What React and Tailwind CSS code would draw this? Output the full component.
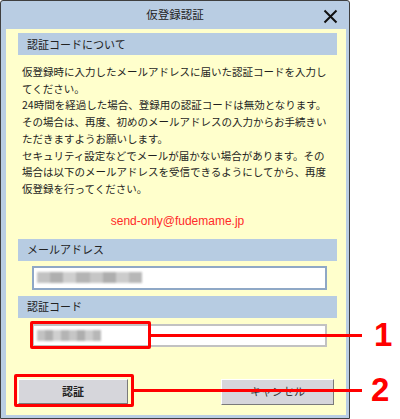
import React from 'react'

const jp = { fontFamily: '"Noto Sans CJK JP", "Noto Sans", sans-serif' }

const Blur = ({ w }) => (
    <div className='flex h-[11px] blur-[1.2px] opacity-80' style={{ width: w }}>
        <div className='flex-1 bg-[#b4b4b4]' />
        <div className='flex-1 bg-[#9c9c9c]' />
        <div className='flex-1 bg-[#c4c4c4]' />
        <div className='flex-1 bg-[#a2a2a2]' />
        <div className='flex-1 bg-[#b8b8b8]' />
        <div className='flex-1 bg-[#9a9a9a]' />
        <div className='flex-1 bg-[#c0c0c0]' />
        <div className='flex-1 bg-[#a6a6a6]' />
    </div>
)

const SectionHead = ({ children, className = '' }) => (
    <div className={`h-[22px] bg-[#b7cce2] flex items-center pl-[9px] text-[11px] text-[#222] ${className}`}>
        {children}
    </div>
)

const App = () => {
    return (
        <div className='relative w-[400px] h-[419px] bg-white overflow-hidden' style={jp}>
            {/* dialog window */}
            <div className='w-[350px] h-[419px] border border-[#3f3f3f] rounded-t-[3px] bg-[#b9cde3] flex flex-col'>
                <div className='relative h-[28px] flex items-center justify-center text-[11.5px] text-[#222]'>
                    仮登録認証
                    <svg className='absolute right-[11px] top-[8px]' width='15' height='15' viewBox='0 0 15 15'>
                        <path d='M1.5 1.5 L13.5 13.5 M13.5 1.5 L1.5 13.5' stroke='#111' strokeWidth='2' />
                    </svg>
                </div>

                <div className='flex-1 ml-[5px] mr-[3px] mb-[3px] bg-[#ffffcc] pl-[12px] pr-[9px] pt-[4px] flex flex-col'>
                    <SectionHead>認証コードについて</SectionHead>

                    <p className='mt-[9px] pl-[4px] text-[10.5px] leading-[16.7px] text-[#1e1e1e] whitespace-nowrap'>
                        仮登録時に入力したメールアドレスに届いた認証コードを入力し<br />
                        てください。<br />
                        24時間を経過した場合、登録用の認証コードは無効となります。<br />
                        その場合は、再度、初めのメールアドレスの入力からお手続きい<br />
                        ただきますようお願いします。<br />
                        セキュリティ設定などでメールが届かない場合があります。その<br />
                        場合は以下のメールアドレスを受信できるようにしてから、再度<br />
                        仮登録を行ってください。
                    </p>

                    <div className='mt-[15px] h-[17px] flex items-center justify-center text-[12px] text-[#ff2a2a]' style={{ fontFamily: '"Liberation Sans", Arial, sans-serif' }}>
                        send-only@fudemame.jp
                    </div>

                    <SectionHead className='mt-[9px]'>メールアドレス</SectionHead>
                    <div className='mt-[5px] ml-[14px] mr-[10px] h-[24px] bg-white border-2 border-[#8fa8c6] flex items-center pl-[3px]'>
                        <Blur w='105px' />
                    </div>

                    <SectionHead className='mt-[6px]'>認証コード</SectionHead>
                    <div className='mt-[6px] ml-[14px] mr-[10px] h-[23px] bg-white border-2 border-[#c2c2c2] flex items-center pl-[3px]'>
                        <Blur w='64px' />
                    </div>

                    <div className='mt-[32px] flex justify-between pr-[3px]'>
                        <button className='w-[110px] h-[25px] bg-[#d6d6db] border border-t-white border-l-white border-b-[#7a7a7a] border-r-[#7a7a7a] text-[11px] font-bold text-[#222]'>
                            認証
                        </button>
                        <button className='w-[113px] h-[26px] bg-[#d6d6db] border border-t-white border-l-white border-b-[#7a7a7a] border-r-[#7a7a7a] text-[11px] text-[#333]'>
                            キャンセル
                        </button>
                    </div>
                </div>
            </div>

            {/* annotation overlays */}
            <div className='absolute left-[30px] top-[321px] w-[121px] h-[28px] border-[3px] border-[#ff0000] rounded-[2px]' />
            <div className='absolute left-[151px] top-[334px] w-[211px] h-[3px] bg-[#ff0000]' />
            <div className='absolute left-[14px] top-[374px] w-[120px] h-[33px] border-[3px] border-[#ff0000] rounded-[2px]' />
            <div className='absolute left-[134px] top-[389px] w-[228px] h-[3px] bg-[#ff0000]' />
            <div className='absolute left-[374px] top-[317px] text-[33px] leading-[36px] font-bold text-[#ff0000]' style={{ fontFamily: '"Liberation Sans", Arial, sans-serif' }}>1</div>
            <div className='absolute left-[371px] top-[372px] text-[33px] leading-[36px] font-bold text-[#ff0000]' style={{ fontFamily: '"Liberation Sans", Arial, sans-serif' }}>2</div>
        </div>
    )
}

export default App
